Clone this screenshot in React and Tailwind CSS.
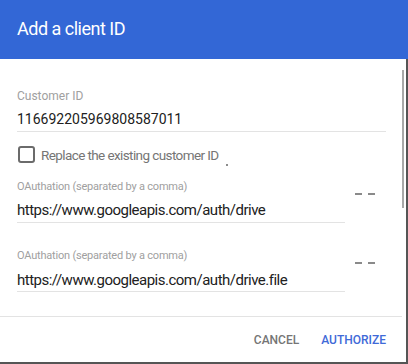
export default function App() {
  const font = { fontFamily: "Roboto, 'Noto Sans', sans-serif" };
  const Dashes = () => (
    <div className="ml-[10px] mt-[13px] flex gap-[6px]">
      <div className="w-[7px] h-[2px] bg-[#8a8a8a]" />
      <div className="w-[7px] h-[2px] bg-[#8a8a8a]" />
    </div>
  );
  return (
    <div className="w-[408px] h-[364px] flex flex-col bg-white border-b-2 border-[#555]" style={font}>
      <div className="h-[59px] shrink-0 bg-[#3367d6] flex items-center pl-[17px] pb-[2px]">
        <span className="text-white text-[18px] leading-[22px] tracking-[-0.5px]">Add a client ID</span>
      </div>
      <div className="flex-1 flex border-r-2 border-[#555]">
        <div className="flex-1 flex flex-col">
          <div className="pl-[17px] flex flex-col">
            <div className="mt-[31px] text-[12px] leading-[13px] text-[#a0a0a0]">Customer ID</div>
            <div className="mt-[6px] w-[369px] pb-[2px] border-b border-[#e3e3e3] text-[14px] leading-[20px] text-[#212121]">
              116692205969808587011
            </div>
            <div className="mt-[14px] flex items-start">
              <div className="w-[17px] h-[17px] ml-[1px] border-2 border-[#6b6b6b] rounded-[3px]" />
              <span className="ml-[6px] text-[13.5px] leading-[18px] text-[#757575] tracking-[-0.6px]">Replace the existing customer ID</span>
              <span className="ml-[7px] mt-[18px] w-[2px] h-[2px] bg-[#666] rounded-full" />
            </div>
            <div className="flex items-start mt-[14px]">
              <div className="w-[328px] flex flex-col">
                <div className="text-[11px] leading-[13px] text-[#a0a0a0] tracking-[-0.2px]">OAuthation (separated by a comma)</div>
                <div className="mt-[7px] pb-[2px] border-b border-[#e3e3e3] text-[15px] leading-[20px] text-[#212121] tracking-[-0.5px]">
                  https://www.googleapis.com/auth/drive
                </div>
              </div>
              <Dashes />
            </div>
            <div className="flex items-start mt-[26px]">
              <div className="w-[328px] flex flex-col">
                <div className="text-[11px] leading-[13px] text-[#a0a0a0] tracking-[-0.2px]">OAuthation (separated by a comma)</div>
                <div className="mt-[8px] pb-[1px] border-b border-[#e3e3e3] text-[15px] leading-[20px] text-[#212121] tracking-[-0.5px]">
                  https://www.googleapis.com/auth/drive.file
                </div>
              </div>
              <Dashes />
            </div>
          </div>
          <div className="mt-[24px] border-t border-[#e3e3e3]" />
          <div className="flex-1 flex items-center justify-end pr-[16px] gap-[22px]">
            <span className="text-[12px] font-medium text-[#757575]">CANCEL</span>
            <span className="text-[12px] font-medium text-[#3f6ad8]">AUTHORIZE</span>
          </div>
        </div>
        <div className="w-[4px] flex justify-start">
          <div className="mt-[11px] w-[2px] h-[138px] bg-[#a8a8a8]" />
        </div>
      </div>
    </div>
  );
}
